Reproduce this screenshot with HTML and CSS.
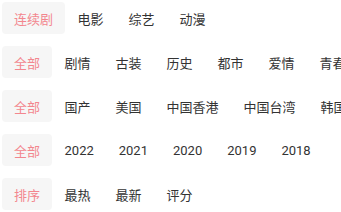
FILE: index.html
```html
<!DOCTYPE html>
<html lang="zh-CN">
<head>
    <meta charset="UTF-8">
    <meta name="viewport" content="width=device-width, initial-scale=1.0">
    <title>筛选</title>
    <link rel="stylesheet" href="styles.css">
</head>
<body>

    <div class="filter">
        <div class="filter-row">
            <span class="tag active">连续剧</span>
            <span class="tag">电影</span>
            <span class="tag">综艺</span>
            <span class="tag">动漫</span>
        </div>
        <div class="filter-row">
            <span class="tag active">全部</span>
            <span class="tag">剧情</span>
            <span class="tag">古装</span>
            <span class="tag">历史</span>
            <span class="tag">都市</span>
            <span class="tag">爱情</span>
            <span class="tag">青春</span>
            <span class="tag">悬疑</span>
        </div>
        <div class="filter-row">
            <span class="tag active">全部</span>
            <span class="tag">国产</span>
            <span class="tag">美国</span>
            <span class="tag">中国香港</span>
            <span class="tag">中国台湾</span>
            <span class="tag">韩国</span>
            <span class="tag">日本</span>
        </div>
        <div class="filter-row">
            <span class="tag active">全部</span>
            <span class="tag">2022</span>
            <span class="tag">2021</span>
            <span class="tag">2020</span>
            <span class="tag">2019</span>
            <span class="tag">2018</span>
        </div>
        <div class="filter-row">
            <span class="tag active">排序</span>
            <span class="tag">最热</span>
            <span class="tag">最新</span>
            <span class="tag">评分</span>
        </div>
    </div>

</body>
</html>
```

FILE: styles.css
```css
body {
    font-family: Roboto, "Noto Sans CJK SC", sans-serif;
    margin: 0;
    background-color: #fff;
    overflow: hidden;
}

.filter {
    padding: 2px 0 0 2px;
}

.filter-row {
    display: flex;
    height: 32px;
    margin-bottom: 12px;
    white-space: nowrap;
    overflow: hidden;
}

.tag {
    display: flex;
    align-items: center;
    flex-shrink: 0;
    padding: 0 12.5px;
    font-size: 13px;
    color: #333;
    border-radius: 4px;
}

/* Selected option in each row */
.tag.active {
    color: #f3868e;
    background-color: #f6f6f6;
    padding: 0 12px;
}
```
